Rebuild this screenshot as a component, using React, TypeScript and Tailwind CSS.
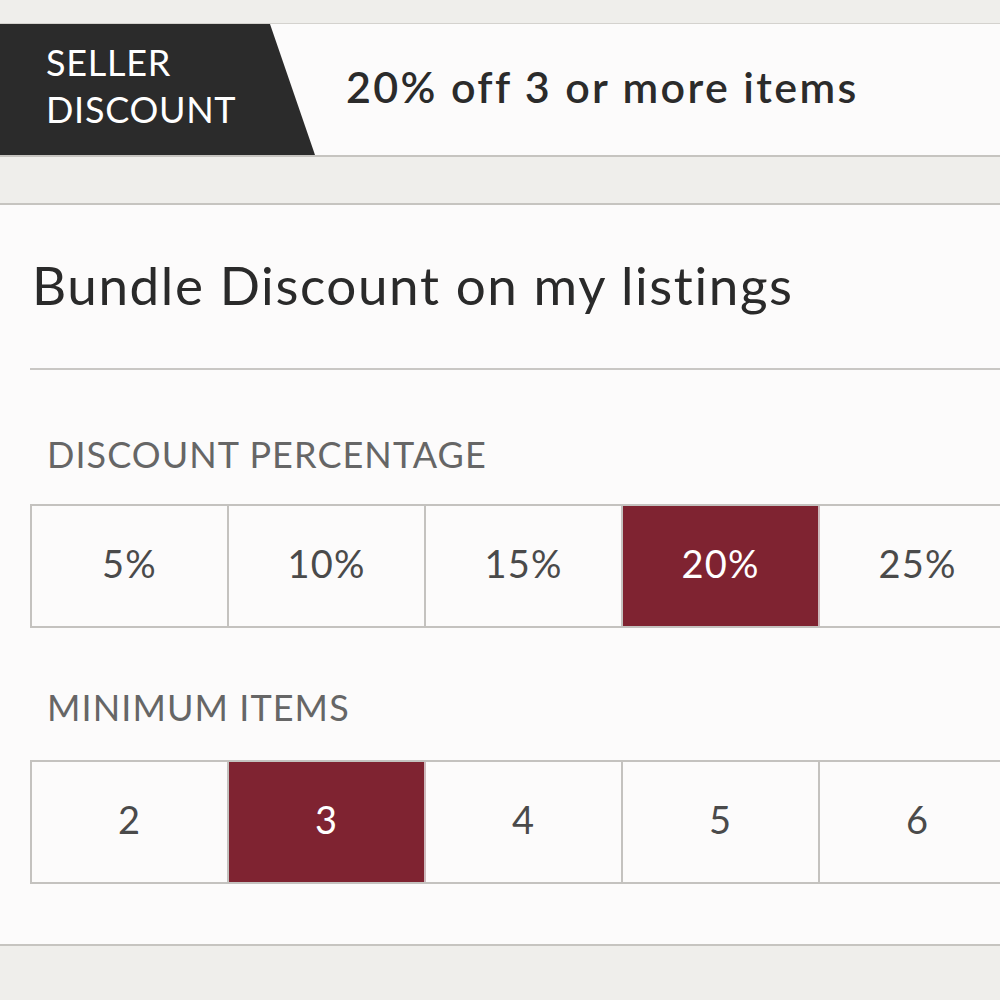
import { useState } from "react";

const percentages = [5, 10, 15, 20, 25];
const minimums = [2, 3, 4, 5, 6];

const OptionRow = ({ options, selected, onSelect, suffix = "" }) => (
  <div className="flex w-[987px] border-y-2 border-l-2 border-[#c4c2bf]">
    {options.map((value) => {
      const active = value === selected;
      return (
        <button
          key={value}
          type="button"
          onClick={() => onSelect(value)}
          className={
            active
              ? "flex h-[120px] flex-1 items-center justify-center border-r-2 border-[#cdb9bc] bg-[#7f2331] pb-[6px] text-[38px] tracking-[0.03em] text-white"
              : "flex h-[120px] flex-1 items-center justify-center border-r-2 border-[#c4c2bf] bg-[#fcfbfb] pb-[6px] text-[38px] tracking-[0.03em] text-[#4a4a4a]"
          }
        >
          {value}
          {suffix}
        </button>
      );
    })}
  </div>
);

export default function App() {
  const [percent, setPercent] = useState(20);
  const [minItems, setMinItems] = useState(3);

  return (
    <div className="h-[1000px] w-[1000px] overflow-hidden bg-[#efeeeb] pt-[23px] font-['Lato',sans-serif]">
      {/* seller discount banner */}
      <div className="flex h-[134px] items-center border-t border-b-2 border-t-[#d4d2ce] border-b-[#c6c4c0] bg-[#fcfbfb]">
        <div className="flex h-full w-[315px] flex-col justify-center bg-[#2b2b2b] pb-[8px] pl-[46px] text-[36px] leading-[47px] tracking-[0.02em] text-white [clip-path:polygon(0_0,270px_0,315px_100%,0_100%)]">
          <span>SELLER</span>
          <span>DISCOUNT</span>
        </div>
        <div className="pb-[4px] pl-[31px] text-[43px] font-semibold tracking-[0.055em] text-[#2b2b2b]">
          20% off {minItems} or more items
        </div>
      </div>

      {/* bundle settings card */}
      <div className="mt-[46px] h-[743px] border-y-2 border-[#c6c4c0] bg-[#fcfbfb] pl-[30px]">
        <h2 className="pt-[45px] pl-[2px] text-[53px] leading-[70px] tracking-[0.03em] text-[#2a2a2a]">
          Bundle Discount on my listings
        </h2>
        <div className="mt-[48px] h-[2px] bg-[#c9c7c4]" />

        <div className="pt-[64px] pl-[17px] text-[36px] leading-[40px] tracking-[0.03em] text-[#666]">
          DISCOUNT PERCENTAGE
        </div>
        <div className="mt-[30px]">
          <OptionRow options={percentages} selected={percent} onSelect={setPercent} suffix="%" />
        </div>

        <div className="pt-[59px] pl-[17px] text-[36px] leading-[40px] tracking-[0.03em] text-[#666]">
          MINIMUM ITEMS
        </div>
        <div className="mt-[33px]">
          <OptionRow options={minimums} selected={minItems} onSelect={setMinItems} />
        </div>
      </div>
    </div>
  );
}
